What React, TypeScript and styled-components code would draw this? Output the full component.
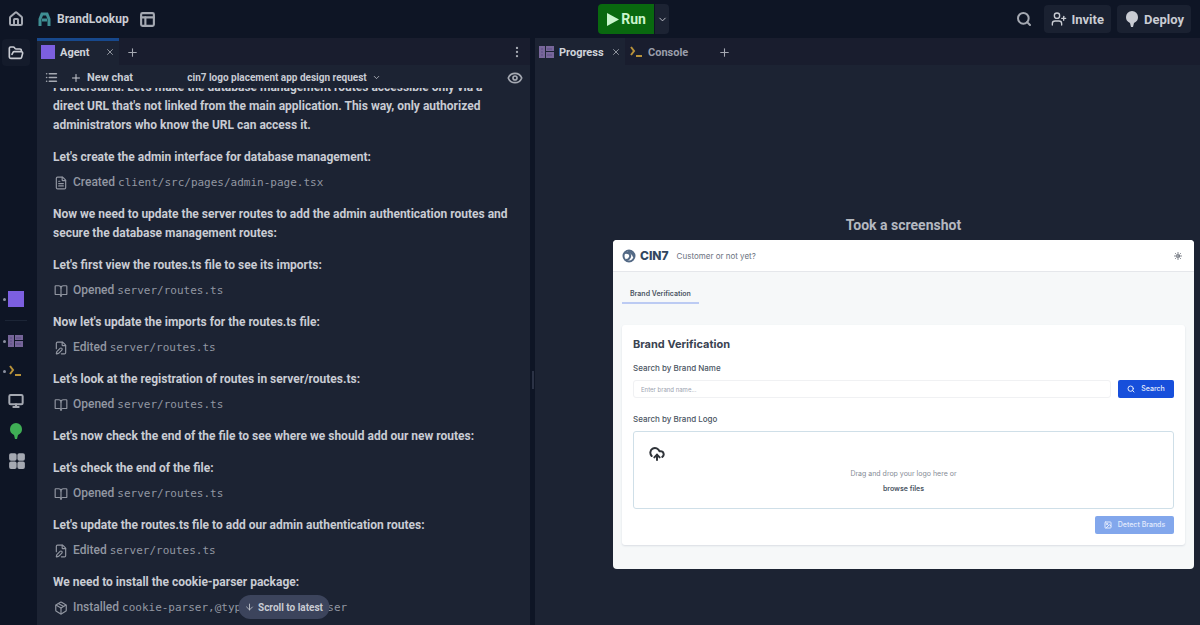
import React from "react";
import styled, { createGlobalStyle } from "styled-components";
import {
  House, ChevronDown, Search, UserPlus, X, Plus, EllipsisVertical, FolderOpen,
  FileText, BookOpen, FilePen, Package, Monitor, LayoutGrid, List, Eye, ArrowDown,
  PanelsTopLeft, Sun, Image as ImageIcon, CloudUpload,
} from "lucide-react";

const Global = createGlobalStyle`
  *, *::before, *::after { box-sizing: border-box; }
  body {
    margin: 0;
    background: #0e1525;
    color: #c9ccd3;
    font-family: Roboto, "Liberation Sans", sans-serif;
    font-size: 12px;
    line-height: 19px;
  }
  button, input { font: inherit; color: inherit; margin: 0; }
  button { border: 0; padding: 0; background: none; display: inline-flex; align-items: center; cursor: pointer; }
  svg { display: block; flex: none; }
  p, h1, h2 { margin: 0; }
`;

const Shell = styled.div`
  display: flex;
  flex-direction: column;
  height: 100vh;
  overflow: hidden;
`;

const TopBar = styled.header`
  display: grid;
  grid-template-columns: 590fr auto 522fr;
  align-items: center;
  height: 38px;
  flex: none;
  padding: 0 9px 0 8px;
`;

const BarGroup = styled.div<{ $end?: boolean }>`
  display: flex;
  align-items: center;
  gap: ${(p) => (p.$end ? 6 : 0)}px;
  justify-content: ${(p) => (p.$end ? "flex-end" : "flex-start")};
`;

const ProjectName = styled.h1`
  font-size: 12px;
  font-weight: 700;
  line-height: 20px;
  margin: 0 10px 0 6px;
`;

const LogoMark = styled.svg`
  margin-left: 14px;
`;

const RunGroup = styled.div`
  display: flex;
  gap: 1px;
  height: 30px;
`;

const RunButton = styled.button`
  width: 56px;
  justify-content: center;
  gap: 2px;
  border-radius: 4px 0 0 4px;
  background: #09680f;
  color: #c9f5cd;
  font-size: 14px;
  font-weight: 700;
`;

const RunMenu = styled.button`
  width: 14px;
  justify-content: center;
  border-radius: 0 4px 4px 0;
  background: #1c2333;
`;

const BarButton = styled.button`
  height: 28px;
  gap: 4px;
  padding: 0 7px;
  border-radius: 4px;
  background: #1a2131;
  font-size: 13px;
  font-weight: 700;
`;

const IconButton = styled.button`
  justify-content: center;
  color: #a5a9b2;
`;

const SearchButton = styled(IconButton)`
  margin-right: 6px;
`;

const Workspace = styled.div`
  display: flex;
  flex: 1;
  min-height: 0;
`;

const Rail = styled.nav`
  display: flex;
  flex-direction: column;
  align-items: center;
  justify-content: space-between;
  width: 37px;
  flex: none;
  padding: 1px 5px 149px 0;
`;

const FilesButton = styled.button`
  width: 28px;
  height: 27px;
  justify-content: center;
  border-radius: 4px;
  background: #141b2b;
`;

const Dock = styled.div`
  display: flex;
  flex-direction: column;
  width: 100%;
`;

const DockButton = styled.button<{ $open?: boolean }>`
  height: 30px;
  gap: 2px;
  padding-left: 3px;
  color: #a5a9b2;
  &::before {
    content: "";
    width: 3px;
    height: 3px;
    border-radius: 50%;
    background: ${(p) => (p.$open ? "#8b90a0" : "transparent")};
  }
`;

const DockRule = styled.hr`
  width: 22px;
  margin: 6px 0 5px 5px;
  border: 0;
  border-top: 1px solid #1c2536;
`;

const Swatch = styled.span<{ $size: number }>`
  display: block;
  flex: none;
  width: ${(p) => p.$size}px;
  height: ${(p) => p.$size}px;
  background: #7c5fe0;
`;

const Pane = styled.section<{ $grow: number }>`
  position: relative;
  display: flex;
  flex-direction: column;
  flex: ${(p) => p.$grow} 1 0;
  min-width: 0;
  background: #1c2333;
`;

const Divider = styled.div`
  display: flex;
  align-items: center;
  justify-content: center;
  width: 5px;
  flex: none;
  padding-top: 96px;
  &::after {
    content: "";
    width: 2px;
    height: 18px;
    background: #2b3245;
  }
`;

const TabStrip = styled.div`
  display: flex;
  align-items: stretch;
  height: 27px;
  flex: none;
  background: #191d2e;
`;

const Tab = styled.div<{ $active?: boolean; $marked?: boolean; $width: number }>`
  display: flex;
  align-items: center;
  gap: 5px;
  width: ${(p) => p.$width}px;
  padding: 1px 4px 0;
  background: ${(p) => (p.$active ? "#1c2333" : "transparent")};
  box-shadow: ${(p) => (p.$marked ? "inset 0 3px 0 #17488c" : "none")};
  color: ${(p) => (p.$active ? "#d0d3da" : "#9a9eaa")};
  font-size: 11px;
  font-weight: 700;
`;

const TabClose = styled(IconButton)`
  margin-left: auto;
`;

const StripButton = styled(IconButton)<{ $push?: boolean }>`
  width: 26px;
  padding-top: 1px;
  margin-left: ${(p) => (p.$push ? "auto" : "0")};
`;

const ChatBar = styled.div`
  display: grid;
  grid-template-columns: 1fr auto 1fr;
  align-items: center;
  height: 23px;
  flex: none;
  padding: 2px 7px 0 8px;
  font-size: 11px;
  font-weight: 700;
`;

const ChatButton = styled.button`
  gap: 5px;
  margin-left: 12px;
`;

const ChatTitle = styled.button`
  gap: 5px;
  font-size: 10px;
`;

const ChatScroll = styled.div`
  display: flex;
  flex: 1;
  flex-direction: column;
  justify-content: flex-end;
  gap: 13px;
  min-height: 0;
  overflow: hidden;
  padding: 0 14px 8px 16px;
`;

const Entry = styled.article`
  display: flex;
  flex: none;
  flex-direction: column;
  gap: 6px;
`;

const Message = styled.p`
  font-weight: 700;
`;

const Step = styled.div`
  display: flex;
  align-items: center;
  gap: 5px;
  height: 19px;
  padding-left: 1px;
  color: #9297a2;
  white-space: pre;
`;

const StepText = styled.span`
  font-weight: 500;
`;

const Code = styled.code`
  font-family: "DejaVu Sans Mono", "Liberation Mono", monospace;
  font-size: 11px;
`;

const LatestButton = styled.button`
  position: absolute;
  left: 50%;
  bottom: 6px;
  height: 24px;
  gap: 4px;
  padding: 0 6px;
  transform: translateX(-50%);
  border-radius: 12px;
  background: #3c445c;
  font-size: 10px;
  font-weight: 700;
  white-space: nowrap;
`;

const Stage = styled.div`
  display: flex;
  flex: 1;
  flex-direction: column;
  gap: 4px;
  padding: 150px 6px 0 78px;
`;

const StageTitle = styled.h2`
  color: #b4b8c0;
  font-size: 14px;
  font-weight: 700;
  line-height: 21px;
  text-align: center;
`;

const Preview = styled.div`
  overflow: hidden;
  border-radius: 4px;
  background: #f6f8f9;
  color: #4b5563;
  font-family: Inter, "Liberation Sans", sans-serif;
  font-size: 8px;
  line-height: 12px;
`;

const PreviewHead = styled.div`
  display: flex;
  align-items: center;
  height: 32px;
  padding: 0 12px 0 9px;
  border-bottom: 1px solid #e5e7eb;
  background: #ffffff;
  color: #6b7280;
`;

const Brand = styled.span`
  margin: 0 8px 0 4px;
  color: #33475f;
  font-size: 12px;
  font-weight: 800;
`;

const PreviewClose = styled.button`
  margin-left: auto;
  color: #555b66;
`;

const PreviewTab = styled.button`
  height: 18px;
  margin: 14px 0 0 9px;
  padding: 0 8px;
  border-bottom: 2px solid #bccbf3;
  font-size: 7px;
  font-weight: 600;
`;

const PreviewCard = styled.div`
  display: flex;
  flex-direction: column;
  margin: 21px 9px 24px;
  padding: 12px 11px 11px;
  border-radius: 3px;
  background: #ffffff;
  box-shadow: 0 1px 2px #d9dde3;
`;

const CardTitle = styled.h2`
  margin-bottom: 11px;
  color: #3a4351;
  font-size: 11px;
  font-weight: 700;
  line-height: 14px;
`;

const FieldLabel = styled.label`
  margin-bottom: 6px;
  font-weight: 500;
`;

const SearchRow = styled.div`
  display: flex;
  gap: 7px;
  margin-bottom: 15px;
`;

const SearchInput = styled.input`
  flex: 1;
  min-width: 0;
  height: 18px;
  padding: 0 7px;
  border: 1px solid #f0f1f3;
  border-radius: 3px;
  background: #ffffff;
  font-size: 6px;
  &::placeholder { color: #9ca3af; opacity: 1; }
`;

const ActionButton = styled.button<{ $width: number; $muted?: boolean }>`
  align-self: flex-end;
  justify-content: center;
  gap: 6px;
  width: ${(p) => p.$width}px;
  height: 18px;
  border-radius: 2px;
  background: ${(p) => (p.$muted ? "#82a7ec" : "#174fdb")};
  color: #e3ebfd;
  font-size: 7px;
  font-weight: 500;
`;

const DropZone = styled.div`
  display: flex;
  flex-direction: column;
  align-items: center;
  height: 78px;
  margin-bottom: 7px;
  padding: 14px 15px 0;
  border: 1px solid #cfdfe8;
  border-radius: 3px;
  color: #858b95;
  font-size: 7px;
`;

const DropIcon = styled.span`
  align-self: flex-start;
  margin-bottom: 6px;
  color: #2f3339;
`;

const BrowseButton = styled.button`
  margin-top: 3px;
  color: #4b5563;
  font-weight: 600;
`;

const Prompt = () => (
  <svg width="14" height="14" viewBox="0 0 14 14" fill="none" stroke="#b8923a" strokeWidth="2">
    <path d="M2 2l3 4-3 4M7 11h6" />
  </svg>
);

const ProgressIcon = () => (
  <svg width="15" height="12" viewBox="0 0 15 12" fill="#8873ae">
    <path d="M0 0h6v12H0zM7 0h8v5H7zM7 6h8v6H7z" opacity=".85" />
    <path d="M8 3h5M8 9h5M2 3h2M2 6h2M2 9h2" stroke="#5d4f86" />
  </svg>
);

const DeployIcon = ({ color = "#c9ccd3" }: { color?: string }) => (
  <svg width="16" height="16" viewBox="0 0 16 16" fill={color}>
    <path d="M8 0a6 6 0 0 1 6 6c0 3-1 4-4 6l-1 4H7l-1-4C3 10 2 9 2 6a6 6 0 0 1 6-6z" />
  </svg>
);

type Log = { text: string; icon?: React.ElementType; verb?: string; code?: string };

const logs: Log[] = [
  { text: "I understand. Let's make the database management routes accessible only via a direct URL that's not linked from the main application. This way, only authorized administrators who know the URL can access it." },
  { text: "Let's create the admin interface for database management:", icon: FileText, verb: "Created", code: "client/src/pages/admin-page.tsx" },
  { text: "Now we need to update the server routes to add the admin authentication routes and secure the database management routes:" },
  { text: "Let's first view the routes.ts file to see its imports:", icon: BookOpen, verb: "Opened", code: "server/routes.ts" },
  { text: "Now let's update the imports for the routes.ts file:", icon: FilePen, verb: "Edited", code: "server/routes.ts" },
  { text: "Let's look at the registration of routes in server/routes.ts:", icon: BookOpen, verb: "Opened", code: "server/routes.ts" },
  { text: "Let's now check the end of the file to see where we should add our new routes:" },
  { text: "Let's check the end of the file:", icon: BookOpen, verb: "Opened", code: "server/routes.ts" },
  { text: "Let's update the routes.ts file to add our admin authentication routes:", icon: FilePen, verb: "Edited", code: "server/routes.ts" },
  { text: "We need to install the cookie-parser package:", icon: Package, verb: "Installed", code: "cookie-parser,@types/cookie-parser" },
];

export default function App() {
  return (
    <Shell>
      <Global />
      <TopBar>
        <BarGroup>
          <IconButton aria-label="Home"><House size={16} strokeWidth={3} /></IconButton>
          <LogoMark width="13" height="14" viewBox="0 0 13 14" fill="none" stroke="#3f8f94" strokeWidth="3">
            <path d="M2 14V7l2-5h5l2 5v7M4 8h5" />
          </LogoMark>
          <ProjectName>BrandLookup</ProjectName>
          <IconButton aria-label="Layout"><PanelsTopLeft size={17} strokeWidth={3} /></IconButton>
        </BarGroup>
        <RunGroup>
          <RunButton>
            <svg width="13" height="13" viewBox="0 0 13 13" fill="currentColor"><path d="M1 0l12 6.5L1 13z" /></svg>
            Run
          </RunButton>
          <RunMenu aria-label="Run options"><ChevronDown size={11} /></RunMenu>
        </RunGroup>
        <BarGroup $end>
          <SearchButton aria-label="Search"><Search size={16} strokeWidth={3} /></SearchButton>
          <BarButton><UserPlus size={16} />Invite</BarButton>
          <BarButton><DeployIcon />Deploy</BarButton>
        </BarGroup>
      </TopBar>
      <Workspace>
        <Rail>
          <FilesButton aria-label="Files"><FolderOpen size={16} strokeWidth={2.5} /></FilesButton>
          <Dock>
            <DockButton $open aria-label="Agent"><Swatch $size={16} /></DockButton>
            <DockRule />
            <DockButton $open aria-label="Progress"><ProgressIcon /></DockButton>
            <DockButton $open aria-label="Console"><Prompt /></DockButton>
            <DockButton aria-label="Preview"><Monitor size={16} strokeWidth={3} /></DockButton>
            <DockButton aria-label="Deployments"><DeployIcon color="#3fae55" /></DockButton>
            <DockButton aria-label="All tools"><LayoutGrid size={18} strokeWidth={3} fill="currentColor" /></DockButton>
          </Dock>
        </Rail>
        <Pane $grow={493}>
          <TabStrip>
            <Tab $active $marked $width={82}>
              <Swatch $size={14} />Agent
              <TabClose aria-label="Close Agent"><X size={10} /></TabClose>
            </Tab>
            <StripButton aria-label="New tab"><Plus size={13} /></StripButton>
            <StripButton $push aria-label="Pane menu"><EllipsisVertical size={14} /></StripButton>
          </TabStrip>
          <ChatBar>
            <BarGroup>
              <IconButton aria-label="Chats"><List size={13} strokeWidth={3} /></IconButton>
              <ChatButton><Plus size={12} />New chat</ChatButton>
            </BarGroup>
            <ChatTitle>cin7 logo placement app design request<ChevronDown size={9} /></ChatTitle>
            <BarGroup $end>
              <IconButton aria-label="Watch"><Eye size={16} strokeWidth={2.5} /></IconButton>
            </BarGroup>
          </ChatBar>
          <ChatScroll>
            {logs.map(({ text, icon: Icon, verb, code }) => (
              <Entry key={text}>
                <Message>{text}</Message>
                {Icon && (
                  <Step>
                    <Icon size={14} />
                    <StepText>{verb} <Code>{code}</Code></StepText>
                  </Step>
                )}
              </Entry>
            ))}
          </ChatScroll>
          <LatestButton><ArrowDown size={10} />Scroll to latest</LatestButton>
        </Pane>
        <Divider />
        <Pane $grow={665}>
          <TabStrip>
            <Tab $active $width={90}>
              <ProgressIcon />Progress
              <TabClose aria-label="Close Progress"><X size={10} /></TabClose>
            </Tab>
            <Tab $width={86}><Prompt />Console</Tab>
            <StripButton aria-label="New tab"><Plus size={13} /></StripButton>
          </TabStrip>
          <Stage>
            <StageTitle>Took a screenshot</StageTitle>
            <Preview>
              <PreviewHead>
                <svg width="14" height="14" viewBox="0 0 14 14" fill="none" stroke="#536985" strokeWidth="2">
                  <circle cx="7" cy="7" r="5.5" />
                  <path d="M2 4c4-1 7 1 6 4s-3 3-4 3M6 2c3 1 5 3 6 6" />
                </svg>
                <Brand>CIN7</Brand>
                Customer or not yet?
                <PreviewClose aria-label="Toggle theme"><Sun size={8} strokeWidth={3} /></PreviewClose>
              </PreviewHead>
              <PreviewTab>Brand Verification</PreviewTab>
              <PreviewCard>
                <CardTitle>Brand Verification</CardTitle>
                <FieldLabel htmlFor="brand-name">Search by Brand Name</FieldLabel>
                <SearchRow>
                  <SearchInput id="brand-name" placeholder="Enter brand name..." />
                  <ActionButton $width={56}><Search size={8} strokeWidth={3} />Search</ActionButton>
                </SearchRow>
                <FieldLabel as="span">Search by Brand Logo</FieldLabel>
                <DropZone>
                  <DropIcon><CloudUpload size={16} strokeWidth={3} /></DropIcon>
                  <span>Drag and drop your logo here or</span>
                  <BrowseButton>browse files</BrowseButton>
                </DropZone>
                <ActionButton $width={79} $muted><ImageIcon size={8} strokeWidth={3} />Detect Brands</ActionButton>
              </PreviewCard>
            </Preview>
          </Stage>
        </Pane>
      </Workspace>
    </Shell>
  );
}
